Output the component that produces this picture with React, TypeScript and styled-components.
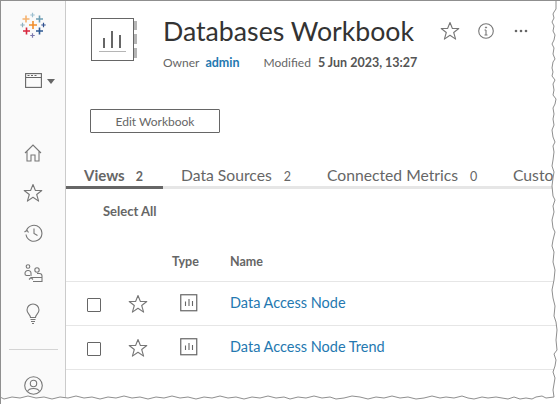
import React from 'react'
import styled, { createGlobalStyle } from 'styled-components'

const GlobalStyle = createGlobalStyle`
  html, body { margin: 0; padding: 0; background: #fff; }
  body { font-family: Lato, "Liberation Sans", sans-serif; color: #333; }
`

const Frame = styled.div`
  position: relative;
  width: 560px;
  height: 404px;
  overflow: hidden;
  display: flex;
  background: #fff;
  box-sizing: border-box;
  border-top: 1px solid #8f8f8f;
  border-left: 1px solid #8f8f8f;
`

const Sidebar = styled.nav`
  width: 64px;
  flex: none;
  background: #fafafa;
  border-right: 1px solid #cbcbcb;
  display: flex;
  flex-direction: column;
  align-items: center;
`

const LogoSlot = styled.div`
  margin-top: 11px;
  height: 27px;
  display: flex;
`

const SiteSwitch = styled.div`
  margin-top: 34px;
  margin-left: 13px;
  display: flex;
  align-items: center;
  gap: 5px;
`

const Caret = styled.span`
  width: 0;
  height: 0;
  border-left: 4px solid transparent;
  border-right: 4px solid transparent;
  border-top: 5px solid #666;
  margin-top: 1px;
`

const NavList = styled.div`
  margin-top: 45px;
  display: flex;
  flex-direction: column;
  align-items: center;
`

const NavItem = styled.div`
  height: 40px;
  display: flex;
  align-items: center;
  justify-content: center;
  svg { display: block; }
`

const NavRule = styled.div`
  width: 49px;
  height: 1px;
  background: #d4d4d4;
  margin-top: 16px;
`

const UserSlot = styled.div`
  margin-top: 26px;
`

const Main = styled.main`
  flex: 1;
  min-width: 0;
  display: flex;
  flex-direction: column;
`

const Header = styled.header`
  display: flex;
  padding: 17px 0 0 25px;
  height: 108px;
  box-sizing: border-box;
`

const Thumb = styled.div`
  width: 50px;
  flex: none;
`

const TitleBlock = styled.div`
  margin-left: 22px;
`

const TitleRow = styled.div`
  display: flex;
  align-items: center;
`

const Title = styled.h1`
  margin: 0;
  font-size: 26.7px;
  line-height: 26px;
  font-weight: 400;
  color: #333;
  white-space: nowrap;
`

const TitleActions = styled.div`
  display: flex;
  align-items: center;
  gap: 18px;
  margin-left: 26px;
  svg { display: block; }
  svg:last-child { margin-left: 2px; }
`

const Meta = styled.div`
  margin-top: 11px;
  display: flex;
  font-size: 12px;
  line-height: 15px;
  color: #666;
  white-space: nowrap;
`

const MetaValue = styled.span<{ $link?: boolean }>`
  margin-left: ${p => (p.$link ? '6px' : '7px')};
  margin-right: ${p => (p.$link ? '24px' : '0')};
  font-size: 12.5px;
  font-weight: 700;
  color: ${p => (p.$link ? '#2478b0' : '#555')};
`

const EditButton = styled.button`
  align-self: flex-start;
  margin-left: 24px;
  width: 130px;
  height: 24px;
  padding: 0;
  background: #fff;
  border: 1px solid #666;
  border-radius: 1px;
  font-family: inherit;
  font-size: 12px;
  color: #666;
`

const Tabs = styled.div`
  margin-top: 32px;
  display: flex;
  height: 21px;
  border-bottom: 3px solid #e6e6e6;
  white-space: nowrap;
`

const Tab = styled.div<{ $active?: boolean; $width: number }>`
  flex: none;
  width: ${p => p.$width}px;
  height: 21px;
  padding-left: 18px;
  border-bottom: 3px solid ${p => (p.$active ? '#666' : 'transparent')};
  font-size: ${p => (p.$active ? '15px' : '15.7px')};
  line-height: 20px;
  font-weight: ${p => (p.$active ? 700 : 400)};
  color: #666;
`

const TabCount = styled.span<{ $gap: number }>`
  margin-left: ${p => p.$gap}px;
  font-size: 12.5px;
`

const SelectAll = styled.div`
  margin: 15px 0 0 37px;
  font-size: 13px;
  line-height: 15px;
  font-weight: 700;
  color: #666;
`

const ColumnHead = styled.div`
  margin-top: 32px;
  height: 20px;
  padding-bottom: 10px;
  display: flex;
  align-items: center;
  font-size: 12.5px;
  font-weight: 700;
  color: #666;
  border-bottom: 1px solid #e6e6e6;
`

const TypeHead = styled.span`
  margin-left: 106px;
  width: 58px;
`

const Row = styled.div`
  height: 43px;
  display: flex;
  align-items: center;
  border-bottom: 1px solid #e6e6e6;
`

const Check = styled.span`
  flex: none;
  margin: 2px 0 0 21px;
  width: 12px;
  height: 12px;
  border: 1.5px solid #666;
  border-radius: 1px;
`

const RowStar = styled.span`
  flex: none;
  margin-left: 27px;
  height: 20px;
  svg { display: block; }
`

const RowType = styled.span`
  flex: none;
  margin: -1px 0 0 32px;
  height: 18px;
  svg { display: block; }
`

const RowLink = styled.a`
  margin: -2px 0 0 32px;
  font-size: 14.5px;
  color: #2478b0;
  white-space: nowrap;
`

const TornEdge = styled.svg`
  position: absolute;
  left: -1px;
  top: -1px;
  pointer-events: none;
`

const TableauLogo = () => {
  const cross = (x: number, y: number, r: number, w: number, c: string) => (
    <g key={`${x}-${y}`} stroke={c} strokeWidth={w}>
      <path d={`M${x - r} ${y}H${x + r}M${x} ${y - r}V${y + r}`} />
    </g>
  )
  return (
    <svg width="26" height="27" viewBox="0 0 26 27">
      {cross(13, 13, 4, 1.6, '#f28e2b')}
      {cross(6, 7, 3.5, 1.6, '#f5b26f')}
      {cross(19.5, 7, 3.5, 1.6, '#6d9eb4')}
      {cross(6.5, 19, 3.5, 1.6, '#d7263d')}
      {cross(19.5, 19, 3.5, 1.6, '#2f5a94')}
      {cross(12.5, 3, 2.2, 1.2, '#9cbfd0')}
      {cross(12.5, 23.5, 2.2, 1.2, '#7b78ad')}
      {cross(2.5, 13, 2.2, 1.2, '#8fb0bf')}
      {cross(23.5, 13, 2.2, 1.2, '#2f4f8f')}
    </svg>
  )
}

const StarIcon = ({ size = 20 }: { size?: number }) => (
  <svg width={size} height={size} viewBox="0 0 20 20" fill="none" stroke="#777" strokeWidth="1.1" strokeLinejoin="round">
    <path d="M10 1.5l2.4 6h6.4l-5.1 4 1.9 6.6L10 14.3l-5.6 3.8 1.9-6.6-5.1-4h6.4z" />
  </svg>
)

const ChartGlyph = () => (
  <svg width="18" height="18" viewBox="0 0 18 18" fill="none" stroke="#666">
    <rect x="0.75" y="0.75" width="16" height="16" strokeWidth="1.2" />
    <path d="M5.5 7.5V12M9 5v7M12.5 7v5" strokeWidth="1.1" />
  </svg>
)

const tearRight = '556,9 554,12 553,14 554,18 552,22 554,26 553,31 555,35 554,40 552,44 554,48 553,54 555,59 553,62 552,68 553,72 552,76 555,80 553,84 554,90 553,95 556,99 555,104 553,108 554,114 553,119 554,125 552,130 553,137 555,142 553,146 554,152 553,160 552,166 554,172 553,178 552,186 553,196 555,200 553,206 554,212 552,220 553,228 555,232 553,240 552,246 554,252 553,262 555,270 554,280 552,290 553,298 555,306 554,316 556,322 557,330 556,340 557,350 554,354 556,360 555,366 553,372 555,378 554,384 553,390 554,397'
const tearBottom = '546,398 542,396 536,397 532,399 526,398 520,399 514,397 508,399 502,398 496,397 488,398 482,397 474,399 468,398 462,396 454,398 446,397 440,398 432,396 424,398 416,399 408,397 400,398 392,396 384,398 376,397 368,399 360,397 352,396 344,398 336,399 330,397 322,398 314,396 306,398 298,397 290,399 284,397 276,398 268,396 260,398 252,397 244,399 236,397 228,398 220,396 212,398 204,397 196,399 188,397 180,398 172,396 164,398 156,397 148,399 140,397 132,398 124,396 116,398 108,397 100,399 92,397 84,398 76,396 68,398 60,397 52,399 44,397 36,398 28,396 20,398 12,397 4,399 0,397'

const App = () => (
  <>
    <GlobalStyle />
    <Frame>
      <Sidebar>
        <LogoSlot><TableauLogo /></LogoSlot>
        <SiteSwitch>
          <svg width="17" height="15" viewBox="0 0 17 15" fill="none" stroke="#666">
            <rect x="0.6" y="0.6" width="15.8" height="13.8" strokeWidth="1.1" />
            <path d="M1 4.5h15" strokeWidth="1" />
            <path d="M2.5 2.5h2M6 2.5h2M9.5 2.5h2" strokeWidth="1" />
          </svg>
          <Caret />
        </SiteSwitch>
        <NavList>
          <NavItem>
            <svg width="18" height="19" viewBox="0 0 18 19" fill="none" stroke="#777" strokeWidth="1.1">
              <path d="M1 9L9 1l8 8M3 7.5V17h4v-6h4v6h4V7.5" />
            </svg>
          </NavItem>
          <NavItem><StarIcon /></NavItem>
          <NavItem>
            <svg width="19" height="18" viewBox="0 0 19 18" fill="none" stroke="#777" strokeWidth="1.1">
              <path d="M2.6 6A8 8 0 1 1 2 10.500" />
              <path d="M0.500 8l2.500-1.800L4.500 8.500" />
              <path d="M10 4.500V9.500l3.500 2" />
            </svg>
          </NavItem>
          <NavItem>
            <svg width="19" height="18" viewBox="0 0 19 18" fill="none" stroke="#777" strokeWidth="1.1">
              <circle cx="4" cy="2.500" r="1.800" />
              <circle cx="13" cy="6" r="2.200" />
              <path d="M6 11.500H2.500A1.800 1.800 0 0 1 1 9.500 2.800 2.800 0 0 1 4 6.500 2.600 2.600 0 0 1 7 9v3" />
              <path d="M7 13.500h11V12a2.500 2.500 0 0 0-2.500-2.500H13M9 17.500h9v-4M5 15.500l2-2 2 2" />
            </svg>
          </NavItem>
          <NavItem>
            <svg width="14" height="21" viewBox="0 0 14 21" fill="none" stroke="#777" strokeWidth="1.1">
              <path d="M4.500 14.500c0-3-3.500-4-3.500-7.500a6 6 0 0 1 12 0c0 3.500-3.500 4.500-3.500 7.500z" />
              <path d="M4.500 16.500h5M5 18.500h4M6 20.500h2" />
            </svg>
          </NavItem>
        </NavList>
        <NavRule />
        <UserSlot>
          <svg width="19" height="19" viewBox="0 0 19 19" fill="none" stroke="#777" strokeWidth="1.1">
            <circle cx="9.500" cy="9.500" r="8.800" />
            <circle cx="9.500" cy="7.500" r="3.200" />
            <path d="M3.500 15.500c1-2.500 3-3 6-3s5 .5 6 3" />
          </svg>
        </UserSlot>
      </Sidebar>
      <Main>
        <Header>
          <Thumb>
            <svg width="48" height="44" viewBox="0 0 48 44" fill="none">
              <rect x="43" y="3" width="3" height="9" fill="#b5b5b5" />
              <rect x="43" y="16" width="3" height="10" fill="#b5b5b5" />
              <rect x="43" y="30" width="3" height="10" fill="#b5b5b5" />
              <rect x="0.500" y="0.500" width="42" height="42" stroke="#666" fill="#fff" />
              <path d="M13 20v10M21 13v17M29 17v13" stroke="#666" strokeWidth="2" />
              <path d="M8 33.500h27" stroke="#b5b5b5" />
            </svg>
          </Thumb>
          <TitleBlock>
            <TitleRow>
              <Title>Databases Workbook</Title>
              <TitleActions>
                <StarIcon />
                <svg width="16" height="16" viewBox="0 0 16 16" fill="none" stroke="#777">
                  <circle cx="8" cy="8" r="7.300" strokeWidth="1.100" />
                  <path d="M8 7v5M6.500 12h3M6.500 7H8" strokeWidth="1.100" />
                  <circle cx="8" cy="4.500" r=".6" fill="#777" />
                </svg>
                <svg width="14" height="4" viewBox="0 0 14 4" fill="#666">
                  <circle cx="2" cy="2" r="1.300" />
                  <circle cx="7" cy="2" r="1.300" />
                  <circle cx="12" cy="2" r="1.300" />
                </svg>
              </TitleActions>
            </TitleRow>
            <Meta>
              Owner<MetaValue $link>admin</MetaValue>
              Modified<MetaValue>5 Jun 2023, 13:27</MetaValue>
            </Meta>
          </TitleBlock>
        </Header>
        <EditButton>Edit Workbook</EditButton>
        <Tabs>
          <Tab $active $width={79}>Views<TabCount $gap={11}>2</TabCount></Tab>
          <Tab $width={128}>Data Sources<TabCount $gap={12}>2</TabCount></Tab>
          <Tab $width={168}>Connected Metrics<TabCount $gap={12}>0</TabCount></Tab>
          <Tab $width={80}>Custom Views</Tab>
        </Tabs>
        <SelectAll>Select All</SelectAll>
        <ColumnHead>
          <TypeHead>Type</TypeHead>
          <span>Name</span>
        </ColumnHead>
        {['Data Access Node', 'Data Access Node Trend'].map(name => (
          <Row key={name}>
            <Check />
            <RowStar><StarIcon /></RowStar>
            <RowType><ChartGlyph /></RowType>
            <RowLink>{name}</RowLink>
          </Row>
        ))}
      </Main>
      <TornEdge width="560" height="404" viewBox="0 0 560 404">
        <polygon points={`557,0 560,0 560,404 0,404 ${tearBottom.split(' ').reverse().join(' ')} ${tearRight.split(' ').reverse().join(' ')}`} fill="#fff" stroke="none" />
        <polyline points={`0,0.500 556,0.500 ${tearRight} ${tearBottom}`} fill="none" stroke="#8f8f8f" strokeWidth="1" />
      </TornEdge>
    </Frame>
  </>
)

export default App
